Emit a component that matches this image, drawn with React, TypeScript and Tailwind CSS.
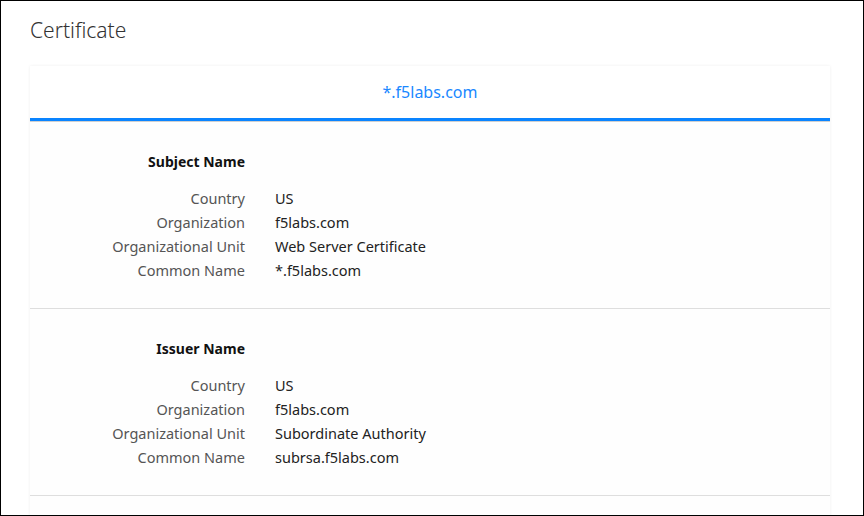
import React from 'react';

type Field = { label: string; value: string };

const subject: Field[] = [
  { label: 'Country', value: 'US' },
  { label: 'Organization', value: 'f5labs.com' },
  { label: 'Organizational Unit', value: 'Web Server Certificate' },
  { label: 'Common Name', value: '*.f5labs.com' },
];

const issuer: Field[] = [
  { label: 'Country', value: 'US' },
  { label: 'Organization', value: 'f5labs.com' },
  { label: 'Organizational Unit', value: 'Subordinate Authority' },
  { label: 'Common Name', value: 'subrsa.f5labs.com' },
];

const Section: React.FC<{ title: string; fields: Field[] }> = ({ title, fields }) => (
  <div className="pt-[28px] pb-[26px] border-b border-[#dedede]">
    <div className="grid grid-cols-[215px_1fr] gap-x-[30px] leading-[24px]">
      <div className="text-right text-[14px] font-bold text-[#111] mb-[12px]">{title}</div>
      <div />
      {fields.map((f) => (
        <React.Fragment key={f.label}>
          <div className="text-right text-[#555]">{f.label}</div>
          <div className="text-[#222]">{f.value}</div>
        </React.Fragment>
      ))}
    </div>
  </div>
);

export default function App() {
  return (
    <div
      className="w-[864px] h-[516px] border border-black bg-white overflow-hidden"
      style={{ fontFamily: '"Noto Sans", "Open Sans", sans-serif' }}
    >
      <div className="pl-[29px] pr-[33px]">
        <h1 className="pt-[14px] h-[65px] text-[21px] font-light text-[#333] leading-[30px]">Certificate</h1>
        <div className="bg-[#fefefe] shadow-[0_0_3px_rgba(0,0,0,0.07)] text-[14.5px]">
          <div className="h-[52px] bg-white flex items-center justify-center text-[16px] text-[#1a88ff]">
            *.f5labs.com
          </div>
          <div className="h-[3px] bg-[#0a84ff]" />
          <div className="h-px bg-[#d0d0d0]" />
          <Section title="Subject Name" fields={subject} />
          <Section title="Issuer Name" fields={issuer} />
          <div className="h-[40px]" />
        </div>
      </div>
    </div>
  );
}
